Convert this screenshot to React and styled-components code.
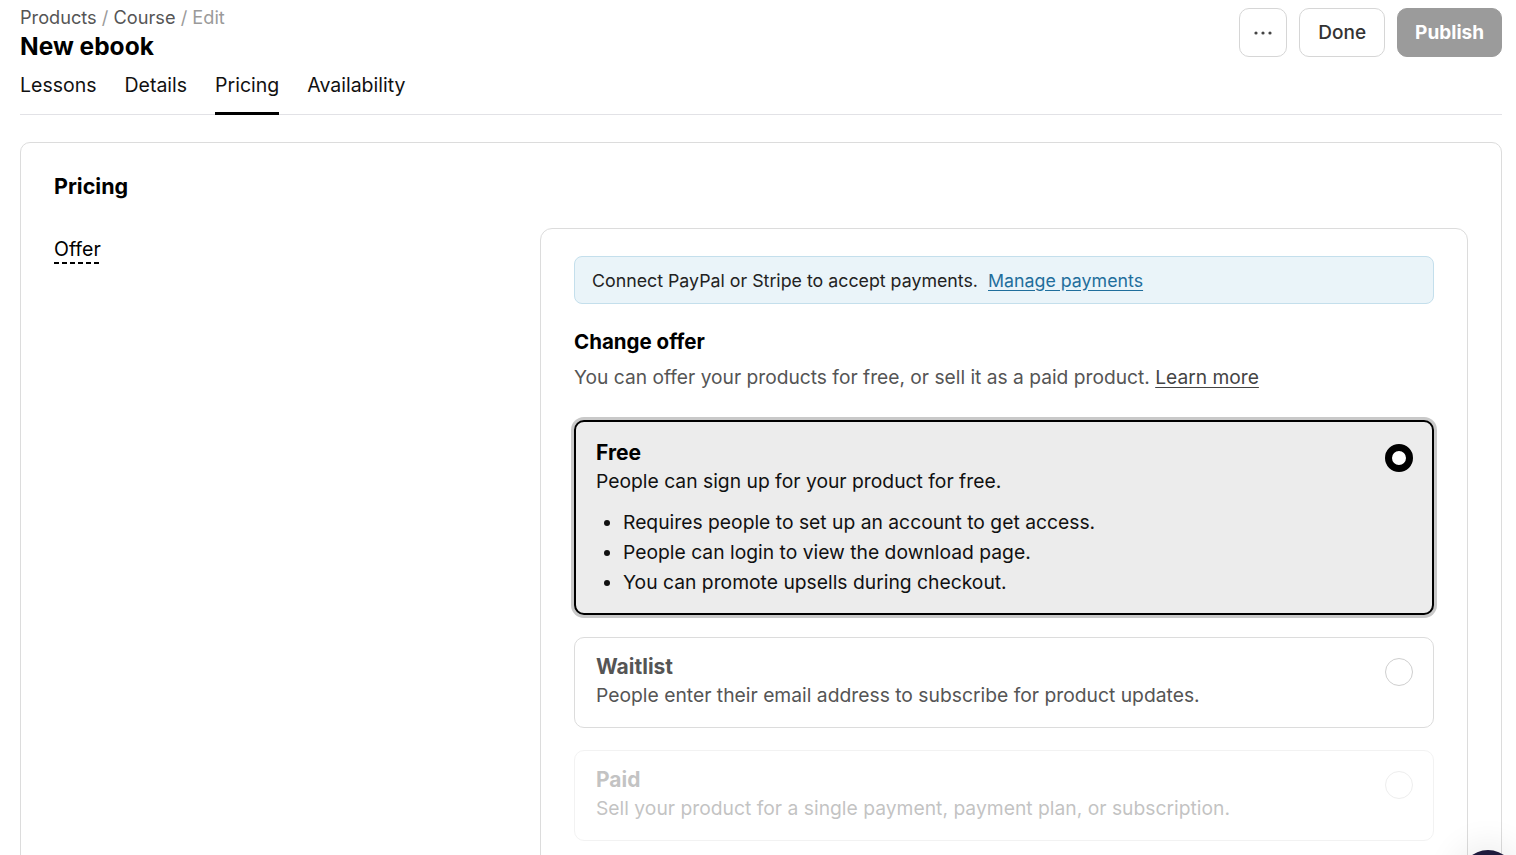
import * as React from "react"
import styled, { createGlobalStyle } from "styled-components"

const GlobalStyle = createGlobalStyle`
  body {
    margin: 0;
    background: #fff;
    font-family: Inter, "Noto Sans", sans-serif;
    color: #111;
    overflow: hidden;
  }
`

const Page = styled.div`
  padding: 0 14px 0 20px;
  height: 855px;
  overflow: hidden;
`

const TopRow = styled.div`
  display: flex;
  justify-content: space-between;
  align-items: flex-start;
  padding-top: 7px;
`

const Breadcrumb = styled.div`
  font-size: 18.2px;
  line-height: 20px;
  color: #555;
`

const Crumb = styled.span`
  color: ${(p) => (p.$muted ? "#9a9a9a" : "#555")};
`

const Title = styled.h1`
  margin: 3px 0 0;
  font-size: 24.5px;
  line-height: 32px;
  font-weight: 700;
  color: #000;
`

const Actions = styled.div`
  display: flex;
  gap: 12px;
  margin-top: 1px;
`

const Button = styled.button`
  height: 49px;
  padding: 0 ${(p) => (p.$icon ? "0" : p.$primary ? "17px" : "18px")};
  width: ${(p) => (p.$icon ? "48px" : "auto")};
  border-radius: 10px;
  font-family: inherit;
  font-size: 19px;
  font-weight: ${(p) => (p.$primary ? 700 : 500)};
  border: 1px solid ${(p) => (p.$primary ? "#9b9b9b" : "#d6d6d6")};
  background: ${(p) => (p.$primary ? "#9b9b9b" : "#fff")};
  color: ${(p) => (p.$primary ? "#fff" : "#333")};
  display: flex;
  align-items: center;
  justify-content: center;
`

const Tabs = styled.nav`
  display: flex;
  gap: 28px;
  margin-top: 11px;
  border-bottom: 1px solid #e2e2e6;
`

const Tab = styled.div`
  font-size: 19.5px;
  line-height: 24px;
  padding-bottom: 15px;
  margin-bottom: -1px;
  color: #111;
  border-bottom: 3px solid ${(p) => (p.$active ? "#000" : "transparent")};
`

const Card = styled.section`
  margin-top: 27px;
  border: 1px solid #dcdcdc;
  border-radius: 10px;
  padding: 29px 33px 0;
  height: 800px;
`

const CardTitle = styled.h2`
  margin: 0;
  font-size: 21.5px;
  line-height: 28px;
  font-weight: 700;
  color: #000;
`

const Body = styled.div`
  display: grid;
  grid-template-columns: 486px 1fr;
  margin-top: 28px;
`

const FieldLabel = styled.div`
  margin-top: 9px;
  align-self: start;
  justify-self: start;
  font-size: 19.5px;
  line-height: 24px;
  padding-bottom: 3px;
  color: #000;
  background: linear-gradient(to right, #000 5px, transparent 5px) repeat-x left bottom / 8px 2px;
`

const Panel = styled.div`
  border: 1px solid #dcdcdc;
  border-radius: 12px;
  padding: 27px 33px 40px;
  height: 700px;
`

const Notice = styled.div`
  height: 48px;
  box-sizing: border-box;
  display: flex;
  align-items: center;
  padding-left: 17px;
  background: #eaf4f9;
  border: 1px solid #c4dfec;
  border-radius: 8px;
  font-size: 17.8px;
  color: #222;
`

const NoticeLink = styled.a`
  margin-left: 10px;
  color: #1f6e9c;
  text-decoration: underline;
  text-underline-offset: 3px;
`

const SectionTitle = styled.h3`
  margin: 24px 0 0;
  font-size: 20.5px;
  line-height: 28px;
  font-weight: 700;
  color: #000;
`

const SectionText = styled.p`
  margin: 8px 0 0;
  font-size: 19.2px;
  line-height: 26px;
  color: #555;
`

const TextLink = styled.a`
  color: #444;
  text-decoration: underline;
  text-underline-offset: 3px;
`

const Options = styled.div`
  display: flex;
  flex-direction: column;
  gap: 22px;
  margin-top: 30px;
`

const Option = styled.div`
  display: flex;
  justify-content: space-between;
  align-items: flex-start;
  border-radius: 10px;
  padding: ${(p) => (p.$selected ? "17px 19px 16px 20px" : "15px 20px 18px 21px")};
  border: ${(p) => (p.$selected ? "2px solid #000" : "1px solid #dcdcdc")};
  background: ${(p) => (p.$selected ? "#ececec" : "#fff")};
  box-shadow: ${(p) => (p.$selected ? "0 0 0 3px #c9c9c9" : "none")};
  opacity: ${(p) => (p.$disabled ? 0.35 : 1)};
`

const OptionTitle = styled.div`
  font-size: 21px;
  line-height: 28px;
  font-weight: 700;
  color: ${(p) => (p.$selected ? "#000" : "#555")};
`

const OptionText = styled.div`
  font-size: 19.3px;
  line-height: 28px;
  color: ${(p) => (p.$selected ? "#111" : "#555")};
`

const Bullets = styled.ul`
  margin: 12px 0 0;
  padding-left: 27px;
  font-size: 19.3px;
  line-height: 30px;
  color: #111;
`

const Radio = styled.span`
  flex: none;
  width: 28px;
  height: 28px;
  box-sizing: border-box;
  margin-top: 5px;
  border-radius: 50%;
  background: #fff;
  border: ${(p) => (p.$checked ? "7px solid #000" : "1px solid #cfcfcf")};
`

const ChatBubble = styled.div`
  position: fixed;
  top: 850px;
  right: 0;
  width: 56px;
  height: 56px;
  border-radius: 50%;
  background: #1f1b3d;
  box-shadow: 0 0 30px 10px rgba(0, 0, 0, 0.06);
`

const Dots = () => (
  <svg width="18" height="4" viewBox="0 0 18 4">
    <circle cx="2" cy="2" r="1.6" fill="#444" />
    <circle cx="9" cy="2" r="1.6" fill="#444" />
    <circle cx="16" cy="2" r="1.6" fill="#444" />
  </svg>
)

const tabs = ["Lessons", "Details", "Pricing", "Availability"]

const offers = [
  {
    title: "Waitlist",
    text: "People enter their email address to subscribe for product updates.",
  },
  {
    title: "Paid",
    text: "Sell your product for a single payment, payment plan, or subscription.",
    disabled: true,
  },
]

const App = () => (
  <Page>
    <GlobalStyle />
    <TopRow>
      <div>
        <Breadcrumb>
          <Crumb>Products</Crumb> <Crumb $muted>/</Crumb> <Crumb>Course</Crumb>{" "}
          <Crumb $muted>/ Edit</Crumb>
        </Breadcrumb>
        <Title>New ebook</Title>
      </div>
      <Actions>
        <Button $icon>
          <Dots />
        </Button>
        <Button>Done</Button>
        <Button $primary>Publish</Button>
      </Actions>
    </TopRow>
    <Tabs>
      {tabs.map((t) => (
        <Tab key={t} $active={t === "Pricing"}>
          {t}
        </Tab>
      ))}
    </Tabs>
    <Card>
      <CardTitle>Pricing</CardTitle>
      <Body>
        <FieldLabel>Offer</FieldLabel>
        <Panel>
          <Notice>
            Connect PayPal or Stripe to accept payments.
            <NoticeLink href="#">Manage payments</NoticeLink>
          </Notice>
          <SectionTitle>Change offer</SectionTitle>
          <SectionText>
            You can offer your products for free, or sell it as a paid product.{" "}
            <TextLink href="#">Learn more</TextLink>
          </SectionText>
          <Options>
            <Option $selected>
              <div>
                <OptionTitle $selected>Free</OptionTitle>
                <OptionText $selected>People can sign up for your product for free.</OptionText>
                <Bullets>
                  <li>Requires people to set up an account to get access.</li>
                  <li>People can login to view the download page.</li>
                  <li>You can promote upsells during checkout.</li>
                </Bullets>
              </div>
              <Radio $checked />
            </Option>
            {offers.map((o) => (
              <Option key={o.title} $disabled={o.disabled}>
                <div>
                  <OptionTitle>{o.title}</OptionTitle>
                  <OptionText>{o.text}</OptionText>
                </div>
                <Radio />
              </Option>
            ))}
          </Options>
        </Panel>
      </Body>
    </Card>
    <ChatBubble />
  </Page>
)

export default App
